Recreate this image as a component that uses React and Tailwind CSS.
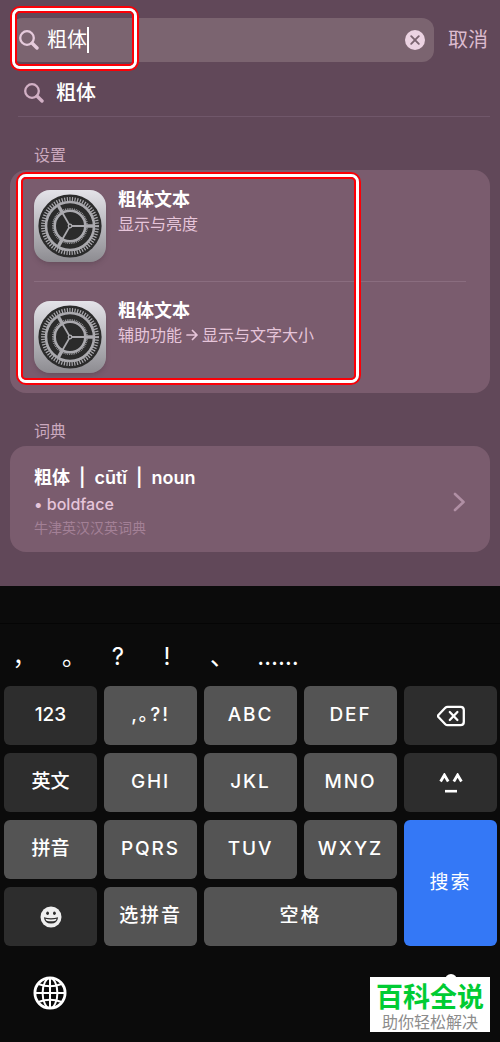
import React, { useState } from "react";

const candidates = [
  { text: "，", width: "w-[49px]" },
  { text: "。", width: "w-[50px]" },
  { text: "?", width: "w-[38px]" },
  { text: "!", width: "w-[60px]" },
  { text: "、", width: "w-[50px]" },
  { text: "……", width: "w-[62px]" },
];

const SearchIcon = ({ className }) => (
  <svg viewBox="0 0 20 20" fill="none" stroke="currentColor" className={className}>
    <circle cx="8" cy="8" r="6.8" strokeWidth="2.3" />
    <path d="M13.2 13.2L18 18" strokeWidth="3.4" strokeLinecap="round" />
  </svg>
);

const SettingsIcon = () => (
  <svg viewBox="0 0 72 72" className="size-[72px] shrink-0 rounded-2xl shadow-md">
    <defs>
      <linearGradient id="settings-bg" x1="0" y1="0" x2="0" y2="1">
        <stop offset="0" stopColor="#e4e3e9" />
        <stop offset="1" stopColor="#8d8c91" />
      </linearGradient>
    </defs>
    <rect width="72" height="72" fill="url(#settings-bg)" />
    <circle cx="36" cy="36" r="31.6" fill="#2b2b2b" />
    <g fill="none" stroke="#aaa9ae">
      <circle cx="36" cy="36" r="27" strokeWidth="4" strokeDasharray="1.2 1.427" />
      <circle cx="36" cy="36" r="24" strokeWidth="2.6" />
      <circle cx="36" cy="36" r="17.2" strokeWidth="1.6" strokeDasharray="0.8 1" />
      <circle cx="36" cy="36" r="15.3" strokeWidth="2.6" />
      {[0, 120, 240].map((angle) => (
        <g key={angle} transform={`rotate(${angle} 36 36)`}>
          <path d="M37 36H51" strokeWidth="1.8" />
          <path d="M50 36H60" strokeWidth="3.4" />
        </g>
      ))}
    </g>
    <circle cx="36" cy="36" r="2.4" fill="#aaa9ae" />
    <circle cx="36" cy="36" r="1.1" fill="#2b2b2b" />
  </svg>
);

const ArrowIcon = () => (
  <svg
    viewBox="0 0 12 12"
    fill="none"
    stroke="currentColor"
    strokeWidth="1.7"
    strokeLinecap="round"
    strokeLinejoin="round"
    className="size-3 shrink-0"
  >
    <path d="M1 6H11M6.5 1.5L11 6L6.5 10.5" />
  </svg>
);

const BackspaceIcon = () => (
  <svg
    viewBox="0 0 28 22"
    fill="none"
    stroke="currentColor"
    strokeWidth="2.3"
    strokeLinecap="round"
    strokeLinejoin="round"
    className="h-[22px] w-7"
  >
    <path d="M10.5 1.8H23.5Q26.8 1.8 26.8 5V17Q26.8 20.2 23.5 20.2H10.5Q9.3 20.2 8.3 19.2L1.2 11.8Q0.6 11 1.2 10.2L8.3 2.8Q9.3 1.8 10.5 1.8Z" />
    <path d="M12.8 7L20.4 15M20.4 7L12.8 15" />
  </svg>
);

const FaceIcon = () => (
  <svg viewBox="0 0 24 20" fill="none" stroke="currentColor" className="h-5 w-6">
    <path d="M1.6 8.5L5.4 2L9.2 8.5M14.8 8.5L18.6 2L22.4 8.5" strokeWidth="2.8" />
    <path d="M6 18.2H18" strokeWidth="2.6" />
  </svg>
);

const SmileIcon = () => (
  <svg viewBox="0 0 22 22" className="size-[22px]">
    <circle cx="11" cy="11" r="10.5" fill="#efefef" />
    <ellipse cx="7.6" cy="7.2" rx="1.4" ry="1.8" fill="#2d2d2d" />
    <ellipse cx="14.4" cy="7.2" rx="1.4" ry="1.8" fill="#2d2d2d" />
    <path d="M3.9 11.2Q11 13.4 18.1 11.2Q17.4 17.6 11 17.6Q4.6 17.6 3.9 11.2Z" fill="#2d2d2d" />
    <path d="M5.4 12.8Q11 14.4 16.6 12.8Q16.1 14.2 15.4 14.8Q11 15.8 6.6 14.8Q5.9 14.2 5.4 12.8Z" fill="#efefef" />
  </svg>
);

const GlobeIcon = () => (
  <svg viewBox="0 0 34 34" fill="none" stroke="currentColor" className="size-[34px]">
    <circle cx="17" cy="17" r="15.1" strokeWidth="2.8" />
    <ellipse cx="17" cy="17" rx="7.4" ry="15" strokeWidth="2" />
    <path d="M17 2V32M2 17H32" strokeWidth="2" />
    <path d="M5.5 8Q17 12.6 28.5 8M5.5 26Q17 21.4 28.5 26" strokeWidth="2" />
  </svg>
);

const MicIcon = () => (
  <svg viewBox="0 0 24 36" fill="none" stroke="currentColor" className="h-9 w-6">
    <rect x="6" y="0" width="12" height="22" rx="6" fill="currentColor" stroke="none" />
    <path d="M2 15V18Q2 27 12 27Q22 27 22 18V15M12 27V34M6 34H18" strokeWidth="2" />
  </svg>
);

// red / white / red frame drawn over the content
const Highlight = ({ className }) => (
  <div className={`pointer-events-none absolute rounded-[10px] border-2 border-[#fb0007] ${className}`}>
    <div className="h-full rounded-lg border-[3px] border-white">
      <div className="h-full rounded-[5px] border-2 border-[#fb0007]" />
    </div>
  </div>
);

const Key = ({ children, label, dark, tight, className = "" }) => (
  <button
    type="button"
    aria-label={label}
    className={`flex items-center justify-center rounded-md text-[19px] font-medium text-white ${
      dark ? "bg-[#2d2d2d]" : "bg-[#545454]"
    } ${tight ? "" : "tracking-widest"} ${className}`}
  >
    {children}
  </button>
);

const SettingsRow = ({ title, children }) => (
  <a href="#settings" className="flex gap-3">
    <SettingsIcon />
    <div>
      <h3 className="text-lg leading-5 font-bold text-white">{title}</h3>
      <p className="mt-1 flex items-center gap-1 text-base leading-5 text-[#e6c5da]">{children}</p>
    </div>
  </a>
);

const App = () => {
  const [query, setQuery] = useState("粗体");

  return (
    <div className="flex min-h-screen flex-col bg-[#614859] font-['Inter','Noto_Sans_CJK_SC',sans-serif]">
      <main className="px-[10px] pb-[34px]">
        <div className="relative flex items-center gap-[14px] pt-[18px] pr-[2px]">
          <label className="flex h-11 grow items-center rounded-xl bg-[#7b6470] pr-2 pl-[9px]">
            <SearchIcon className="size-5 shrink-0 text-[#e6cbdc]" />
            <input
              type="text"
              aria-label="搜索"
              value={query}
              onChange={(e) => setQuery(e.target.value)}
              className="ml-2 field-sizing-content text-xl leading-6 text-white outline-none"
            />
            <span className="h-[26px] w-[2px] shrink-0 bg-white" />
            <button type="button" aria-label="清除" onClick={() => setQuery("")} className="ml-auto">
              <svg viewBox="0 0 22 22" className="size-[22px]">
                <circle cx="11" cy="11" r="10" fill="#ecd3e2" />
                <path d="M7.2 7.2L14.8 14.8M14.8 7.2L7.2 14.8" stroke="#7b6470" strokeWidth="1.9" strokeLinecap="round" />
              </svg>
            </button>
          </label>
          <button type="button" className="text-xl leading-6 text-[#dcbccf]">
            取消
          </button>
          <Highlight className="top-[6px] left-0 h-[65px] w-[129px]" />
        </div>

        <a href="#suggestion" className="ml-2 flex h-[55px] items-center gap-3 border-b border-[#70576a] pt-2 pl-[6px] text-xl text-white">
          <SearchIcon className="size-5 text-[#d2b0c5]" />
          <span className="font-medium">粗体</span>
        </a>

        <section>
          <h2 className="mt-7 mb-1 pl-6 text-base leading-[21px] text-[#cba9be]">设置</h2>
          <div className="relative rounded-2xl bg-[#7a5c6e] px-6 py-5">
            <SettingsRow title="粗体文本">显示与亮度</SettingsRow>
            <hr className="my-[19px] border-[#8a6d7f]" />
            <SettingsRow title="粗体文本">
              <span>辅助功能</span>
              <ArrowIcon />
              <span>显示与文字大小</span>
            </SettingsRow>
            <Highlight className="top-[2px] left-[6px] h-[213px] w-[345px]" />
          </div>
        </section>

        <section>
          <h2 className="mt-7 mb-1 pl-6 text-base leading-[21px] text-[#cba9be]">词典</h2>
          <a href="#dictionary" className="flex items-center justify-between rounded-2xl bg-[#7a5c6e] pt-5 pr-6 pb-[14px] pl-6">
            <div>
              <h3 className="flex gap-[9px] text-lg leading-6 font-semibold text-white">
                <span>粗体</span>
                <span>|</span>
                <span>cūtǐ</span>
                <span>|</span>
                <span>noun</span>
              </h3>
              <p className="text-base leading-7 font-medium text-[#e6c5da]">• boldface</p>
              <p className="text-sm leading-5 text-[#a38096]">牛津英汉汉英词典</p>
            </div>
            <svg viewBox="0 0 14 20" fill="none" stroke="#b08fa4" strokeWidth="2.6" strokeLinecap="round" strokeLinejoin="round" className="h-5 w-[14px]">
              <path d="M3 2L11.5 10L3 18" />
            </svg>
          </a>
        </section>
      </main>

      <div className="flex grow flex-col bg-[#0b0b0b] text-white">
        <div className="h-[38px] border-b border-[#050505]" />
        <div className="flex h-[62px] items-center pt-1">
          {candidates.map((c) => (
            <button key={c.text} type="button" className={`text-center text-2xl leading-8 ${c.width}`}>
              {c.text}
            </button>
          ))}
        </div>

        <div className="grid auto-rows-[59px] grid-cols-5 gap-x-[7px] gap-y-2 pr-[3px] pl-1">
          <Key dark tight>123</Key>
          <Key>,｡?!</Key>
          <Key>ABC</Key>
          <Key>DEF</Key>
          <Key dark label="删除">
            <BackspaceIcon />
          </Key>
          <Key dark tight>英文</Key>
          <Key>GHI</Key>
          <Key>JKL</Key>
          <Key>MNO</Key>
          <Key dark label="颜文字">
            <FaceIcon />
          </Key>
          <Key tight>拼音</Key>
          <Key>PQRS</Key>
          <Key>TUV</Key>
          <Key>WXYZ</Key>
          <button type="button" className="row-span-2 rounded-md bg-[#3478f6] text-[19px] tracking-widest text-white">
            搜索
          </button>
          <Key dark label="表情">
            <SmileIcon />
          </Key>
          <Key>选拼音</Key>
          <Key className="col-span-2">空格</Key>
        </div>

        <div className="relative flex items-start justify-between px-[33px] pt-7 pb-8">
          <button type="button" aria-label="切换键盘" className="pt-[2px]">
            <GlobeIcon />
          </button>
          <button type="button" aria-label="听写" className="px-1">
            <MicIcon />
          </button>
          <div className="absolute right-[10px] bottom-[10px] flex h-[55px] w-[120px] flex-col items-center justify-end bg-white">
            <p className="text-[27px] leading-7 font-bold text-[#00cc33]">百科全说</p>
            <p className="text-base leading-5 text-[#8c8c8c]">助你轻松解决</p>
          </div>
        </div>
      </div>
    </div>
  );
};

export default App;
